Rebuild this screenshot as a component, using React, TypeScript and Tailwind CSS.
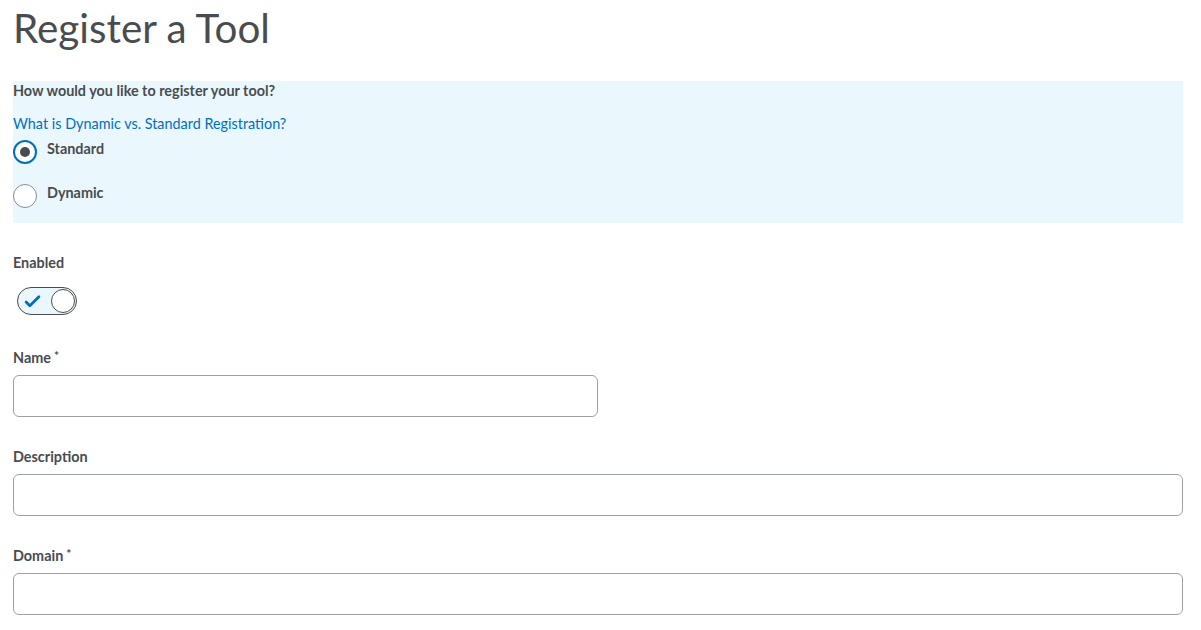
import { useState } from "react";

function Radio({ label, checked, onSelect }: { label: string; checked: boolean; onSelect: () => void }) {
  return (
    <label className="flex items-start gap-[10px] cursor-pointer" onClick={onSelect}>
      <span
        className={
          checked
            ? "w-6 h-6 rounded-full border-2 border-[#006fbf] bg-white flex items-center justify-center shrink-0"
            : "w-6 h-6 rounded-full border border-[#868c8f] bg-white flex items-center justify-center shrink-0"
        }
      >
        {checked && <span className="w-[10px] h-[10px] rounded-full bg-[#494c4e]" />}
      </span>
      <span className="text-[14.4px] leading-5 font-bold text-[#494c4e] -mt-[1px]">{label}</span>
    </label>
  );
}

function Field({ label, required, wide, first }: { label: string; required?: boolean; wide?: boolean; first?: boolean }) {
  return (
    <div className={first ? "mt-[33px]" : "mt-[30px]"}>
      <div className="text-[14.4px] leading-5 font-bold text-[#494c4e]">
        {label}
        {required && <span className="text-[12px] align-top leading-4 ml-[3px] text-[#494c4e]">*</span>}
      </div>
      <input
        className={
          wide
            ? "mt-[7px] w-full h-[42px] rounded-[6px] border border-[#9ea1a3] bg-white px-3 outline-none"
            : "mt-[7px] w-[585px] h-[42px] rounded-[6px] border border-[#9ea1a3] bg-white px-3 outline-none"
        }
      />
    </div>
  );
}

export default function App() {
  const [mode, setMode] = useState("standard");

  return (
    <div className="pl-[13px] pr-[18px] bg-white min-h-screen text-[#494c4e]" style={{ fontFamily: "Lato, 'Noto Sans', sans-serif" }}>
      <h1 className="text-[40.4px] leading-[50px] pt-[3px] font-normal text-[#494c4e]">Register a Tool</h1>

      {/* Registration type */}
      <div className="mt-[28px] bg-[#eaf8fe] pb-[15px]">
        <p className="text-[14.4px] leading-5 font-bold">How would you like to register your tool?</p>
        <a href="#" className="block mt-3 text-[14.4px] leading-[22px] text-[#006fbf]">
          What is Dynamic vs. Standard Registration?
        </a>
        <div className="mt-[5px] flex flex-col gap-5">
          <Radio label="Standard" checked={mode === "standard"} onSelect={() => setMode("standard")} />
          <Radio label="Dynamic" checked={mode === "dynamic"} onSelect={() => setMode("dynamic")} />
        </div>
      </div>

      <div className="mt-[30px] text-[14.4px] leading-5 font-bold">Enabled</div>
      <div className="mt-[14px] ml-1 w-[60px] h-[28px] rounded-full border-[1.5px] border-[#494c4e] bg-[#eaf8fe] flex items-center justify-between pl-[6px] pr-[1px]">
        <svg width="17" height="17" viewBox="0 0 16 16" fill="none">
          <path d="M2 8.5l3.5 3.5L14 3.5" stroke="#006fbf" strokeWidth="2.6" strokeLinecap="round" strokeLinejoin="round" />
        </svg>
        <span className="w-[24px] h-[24px] rounded-full border-[1.5px] border-[#494c4e] bg-white" />
      </div>

      <Field label="Name" required first />
      <Field label="Description" wide />
      <Field label="Domain" required wide />
    </div>
  );
}
